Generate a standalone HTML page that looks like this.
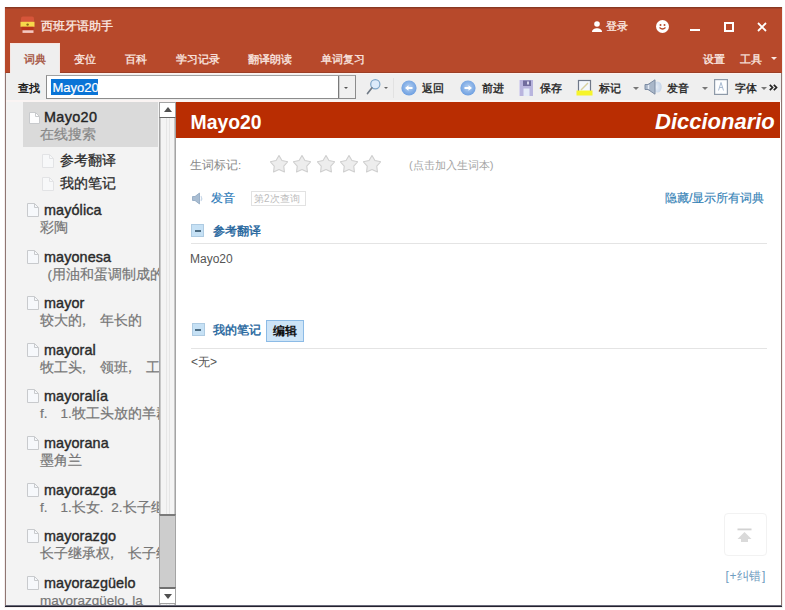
<!DOCTYPE html>
<html><head><meta charset="utf-8">
<style>
*{margin:0;padding:0;box-sizing:border-box}
html,body{width:785px;height:610px;overflow:hidden;background:#fff;font-family:"Liberation Sans",sans-serif}
.a{position:absolute;white-space:nowrap}
svg{display:block}
.tt{color:#fbe9e3;font-size:11.3px;line-height:12px;-webkit-text-stroke:0.3px #fbe9e3}
.tb{font-size:11.3px;line-height:12px;color:#222;-webkit-text-stroke:0.35px #222}
.hw{font-size:14.4px;line-height:15px;color:#2a2a2a;-webkit-text-stroke:0.4px #2a2a2a;letter-spacing:0.1px}
.tr{font-size:13.5px;line-height:15px;color:#767676;-webkit-text-stroke:0.2px #767676}
.doc{position:absolute;width:11px;height:12px;border:1px solid #c9ced6;background:#f8f9fb}
.sdoc{position:absolute;width:11px;height:11px;border:1px solid #dde0e4;background:#f6f7f8}
.tri{position:absolute;width:0;height:0;border-left:3px solid transparent;border-right:3px solid transparent;border-top:3px solid #777}
</style></head><body>
<!-- window frame -->
<div class="a" style="left:4px;top:7px;width:779px;height:601px;background:#f4eeee"></div>
<div class="a" style="left:5px;top:7px;width:777px;height:600px;background:#8f7672"></div>
<div class="a" style="left:5px;top:605px;width:777px;height:1px;background:#6a6a7a"></div>
<div class="a" style="left:5px;top:606px;width:777px;height:1px;background:#22222e"></div>
<div class="a" style="left:5px;top:7px;width:777px;height:66px;background:#b7492b"></div>
<div class="a" style="left:5px;top:7px;width:777px;height:1px;background:#8a3822"></div>
<div class="a" style="left:5px;top:8px;width:777px;height:1px;background:#a2412a"></div>

<!-- title bar -->
<svg class="a" style="left:19px;top:15px" width="17" height="20" viewBox="0 0 17 20">
  <rect x="2" y="1.5" width="13" height="6" rx="2" fill="#d6553a"/>
  <rect x="1.5" y="6.8" width="14" height="5" fill="#f7d84a"/>
  <circle cx="8.6" cy="9.6" r="1.2" fill="#8a6a1a"/>
  <rect x="2.5" y="11.8" width="12" height="3.2" fill="#b8331c"/>
  <rect x="3.5" y="15.3" width="11" height="2.6" fill="#f4c8c0"/>
</svg>
<div class="a tt" style="left:41px;top:20px;font-size:11.6px">西班牙语助手</div>

<div class="a" style="left:592px;top:21px;width:10px;height:11px">
  <svg width="10" height="11" viewBox="0 0 10 11"><circle cx="5" cy="3" r="2.8" fill="#fff"/><path d="M0 11 C0 6 10 6 10 11Z" fill="#fff"/></svg>
</div>
<div class="a tt" style="left:605.5px;top:20px">登录</div>
<div class="a" style="left:656px;top:20px;width:13px;height:13px">
  <svg width="13" height="13" viewBox="0 0 13 13"><circle cx="6.5" cy="6.5" r="6.5" fill="#fff"/><circle cx="4.5" cy="5" r="1" fill="#b7492b"/><circle cx="8.5" cy="5" r="1" fill="#b7492b"/><path d="M3.5 7.5 Q6.5 10.5 9.5 7.5" stroke="#b7492b" stroke-width="1.2" fill="none"/></svg>
</div>
<div class="a" style="left:690px;top:29px;width:10px;height:2px;background:#fff"></div>
<div class="a" style="left:724px;top:22px;width:10px;height:10px;border:2px solid #fff"></div>
<div class="a" style="left:757px;top:22px;width:10px;height:10px">
  <svg width="10" height="10" viewBox="0 0 10 10"><path d="M1 1L9 9M9 1L1 9" stroke="#fff" stroke-width="1.8"/></svg>
</div>

<!-- tabs -->
<div class="a" style="left:10px;top:43px;width:50px;height:31px;background:#efefef;border:1px solid #f6e6e2;border-bottom:none"></div>
<div class="a tt" style="left:24px;top:53px;color:#a4503b;-webkit-text-stroke:0.35px #a4503b">词典</div>
<div class="a tt" style="left:74px;top:53px">变位</div>
<div class="a tt" style="left:125px;top:53px">百科</div>
<div class="a tt" style="left:176px;top:53px">学习记录</div>
<div class="a tt" style="left:248px;top:53px">翻译朗读</div>
<div class="a tt" style="left:321px;top:53px">单词复习</div>
<div class="a tt" style="left:703px;top:52.5px">设置</div>
<div class="a tt" style="left:740px;top:52.5px">工具</div>
<div class="tri" style="left:771px;top:57px;border-top-color:#fbe9e3"></div>

<!-- toolbar -->
<div class="a" style="left:6px;top:73px;width:775px;height:29px;background:#efefef"></div>
<div class="a" style="left:6px;top:72px;width:4px;height:1px;background:#9c3f26"></div>
<div class="a" style="left:60px;top:72px;width:721px;height:1px;background:#9c3f26"></div>
<div class="a" style="left:60px;top:73px;width:721px;height:1px;background:#fcf2f0"></div>
<div class="a" style="left:6px;top:100px;width:775px;height:2px;background:#faf4f3"></div>
<div class="a tb" style="left:17.5px;top:81.5px;font-weight:bold;-webkit-text-stroke:0">查找</div>
<div class="a" style="left:46px;top:75px;width:310px;height:24px;border:1px solid #8c8c8c;border-top-color:#a0a0a0;background:#fff"></div>
<div class="a" style="left:51px;top:79px;height:16px;width:47px;background:#0a74d6"></div>
<div class="a" style="left:52.5px;top:79.5px;font-size:13px;line-height:16px;color:#fff;-webkit-text-stroke:0.2px #fff">Mayo20</div>
<div class="a" style="left:338px;top:76px;width:17px;height:22px;background:#f0f0f0;border-left:1px solid #7a7a7a;box-shadow:inset 1px 0 0 #cfcfcf"></div>
<div class="a" style="left:344px;top:86.5px;border-left:2.5px solid transparent;border-right:2.5px solid transparent;border-top:2.5px solid #555"></div>

<svg class="a" style="left:366px;top:78px" width="15" height="17" viewBox="0 0 15 17">
<circle cx="9.3" cy="6.3" r="4.6" fill="#dcebfa" stroke="#7ea6c8" stroke-width="1.2"/>
<path d="M6 9.8L1.5 15.5" stroke="#707a86" stroke-width="1.7" stroke-linecap="round"/>
</svg>
<div class="a" style="left:384px;top:86.5px;border-left:2.5px solid transparent;border-right:2.5px solid transparent;border-top:2.5px solid #666"></div>
<div class="a" style="left:393px;top:78px;width:1px;height:20px;background:#e2e2e2"></div>

<svg class="a" style="left:401px;top:80px" width="16" height="16" viewBox="0 0 16 16"><defs><radialGradient id="bg1" cx="50%" cy="45%" r="55%"><stop offset="0" stop-color="#b4d0f2"/><stop offset="1" stop-color="#6c9ee0"/></radialGradient></defs><circle cx="8" cy="8" r="7.6" fill="url(#bg1)"/><path d="M4 8L7.5 5.2V6.9H11.5V9.1H7.5V10.8Z" fill="#fff"/></svg>
<div class="a tb" style="left:422px;top:81.5px">返回</div>
<svg class="a" style="left:460px;top:80px" width="16" height="16" viewBox="0 0 16 16"><circle cx="8" cy="8" r="7.6" fill="url(#bg1)"/><path d="M12 8L8.5 5.2V6.9H4.5V9.1H8.5V10.8Z" fill="#fff"/></svg>
<div class="a tb" style="left:481.5px;top:81.5px">前进</div>

<svg class="a" style="left:519px;top:80px" width="15" height="16" viewBox="0 0 15 16">
<rect x="0" y="0" width="14" height="16" fill="#b9b5de"/>
<rect x="4" y="0.5" width="8" height="5.5" fill="#716d9e"/>
<rect x="8" y="1.5" width="2" height="3" fill="#d8d6ee"/>
<rect x="4.5" y="8.5" width="6" height="7.5" fill="#e4ebf8"/>
<rect x="0" y="0" width="1" height="16" fill="#d9d6ee"/>
</svg>
<div class="a tb" style="left:540px;top:81.5px">保存</div>

<svg class="a" style="left:576px;top:79px" width="17" height="17" viewBox="0 0 17 17">
<rect x="2.5" y="1.5" width="12" height="12" fill="#f4f8fd" stroke="#6f7888" stroke-width="1.2"/>
<path d="M5 11L12 4" stroke="#d8d0a0" stroke-width="1.5"/>
<rect x="0.5" y="11.5" width="16" height="5" fill="#f6f42a"/>
</svg>
<div class="a tb" style="left:599px;top:81.5px">标记</div>
<div class="tri" style="left:633px;top:87px"></div>

<svg class="a" style="left:644px;top:79px" width="20" height="16" viewBox="0 0 20 16">
<defs><radialGradient id="wv" cx="30%" cy="50%" r="70%"><stop offset="0" stop-color="#e8f0fa"/><stop offset="1" stop-color="#b9cde6"/></radialGradient></defs>
<ellipse cx="13.5" cy="8" rx="4.2" ry="5.5" fill="url(#wv)" opacity="0.8"/>
<path d="M1 5.5H4L11 0.8V15.2L4 10.5H1Z" fill="#a9b7c9" stroke="#7d8ca3" stroke-width="1"/>
<path d="M4.5 6V10" stroke="#e4ebf4" stroke-width="1.5"/>
</svg>
<div class="a tb" style="left:667px;top:81.5px">发音</div>
<div class="tri" style="left:702px;top:87px"></div>

<svg class="a" style="left:714px;top:79px" width="14" height="16" viewBox="0 0 14 16">
<rect x="0.6" y="0.6" width="12.8" height="14.8" fill="#fdfeff" stroke="#8e9aa8" stroke-width="1.2"/>
<path d="M4.5 11.5L7 3.5L9.5 11.5M5.5 8.5H8.5" stroke="#9fb3cc" stroke-width="0.9" fill="none"/>
</svg>
<div class="a tb" style="left:735px;top:81.5px">字体</div>
<div class="tri" style="left:761px;top:87px"></div>
<svg class="a" style="left:769px;top:84px" width="9" height="7" viewBox="0 0 9 7"><path d="M0.8 0.8L3.5 3.5L0.8 6.2M4.8 0.8L7.5 3.5L4.8 6.2" stroke="#222" stroke-width="1.7" fill="none"/></svg>

<!-- main area -->
<div class="a" style="left:6px;top:102px;width:775px;height:503px;background:#fff"></div>

<!-- sidebar -->
<div class="a" style="left:6px;top:102px;width:153px;height:503px;background:#f3f3f3;overflow:hidden">
  <div class="a" style="left:17px;top:0px;width:135px;height:45px;background:#dadada"></div>
  <svg class="a" style="left:23px;top:10px" width="11" height="12" viewBox="0 0 11 12"><path d="M0.5 0.5H6.5L10.5 4.5V11.5H0.5Z" fill="#fdfdfe" stroke="#c8cacd"/><path d="M6.5 0.5V4.5H10.5" fill="none" stroke="#c8cacd"/></svg>
  <div class="a hw" style="left:38px;top:7.5px;color:#222;letter-spacing:0.35px">Mayo20</div>
  <div class="a tr" style="left:34px;top:25px;color:#888;-webkit-text-stroke-color:#888">在线搜索</div>
  <svg class="a" style="left:36px;top:52px" width="12" height="14" viewBox="0 0 12 14"><path d="M0.5 0.5H7.5L11.5 4.5V13.5H0.5Z" fill="#f7f8f9" stroke="#e2e3e5"/><path d="M7.5 0.5V4.5H11.5" fill="none" stroke="#e2e3e5"/></svg>
  <div class="a hw" style="left:54px;top:51px;font-size:13.5px;-webkit-text-stroke:0.25px #2a2a2a">参考翻译</div>
  <svg class="a" style="left:36px;top:75px" width="12" height="14" viewBox="0 0 12 14"><path d="M0.5 0.5H7.5L11.5 4.5V13.5H0.5Z" fill="#f7f8f9" stroke="#e2e3e5"/><path d="M7.5 0.5V4.5H11.5" fill="none" stroke="#e2e3e5"/></svg>
  <div class="a hw" style="left:54px;top:74px;font-size:13.5px;-webkit-text-stroke:0.25px #2a2a2a">我的笔记</div>
<svg class="a" style="left:21px;top:100.9px" width="12" height="14" viewBox="0 0 12 14"><path d="M0.5 0.5H7.5L11.5 4.5V13.5H0.5Z" fill="#f6f8fb" stroke="#c8cacd"/><path d="M7.5 0.5V4.5H11.5" fill="none" stroke="#c8cacd"/></svg>
<div class="a hw" style="left:38px;top:100.9px">mayólica</div>
<div class="a tr" style="left:34px;top:117.9px">彩陶</div>
<svg class="a" style="left:21px;top:147.5px" width="12" height="14" viewBox="0 0 12 14"><path d="M0.5 0.5H7.5L11.5 4.5V13.5H0.5Z" fill="#f6f8fb" stroke="#c8cacd"/><path d="M7.5 0.5V4.5H11.5" fill="none" stroke="#c8cacd"/></svg>
<div class="a hw" style="left:38px;top:147.5px">mayonesa</div>
<div class="a tr" style="left:41.5px;top:164.5px">(用油和蛋调制成的</div>
<svg class="a" style="left:21px;top:194.1px" width="12" height="14" viewBox="0 0 12 14"><path d="M0.5 0.5H7.5L11.5 4.5V13.5H0.5Z" fill="#f6f8fb" stroke="#c8cacd"/><path d="M7.5 0.5V4.5H11.5" fill="none" stroke="#c8cacd"/></svg>
<div class="a hw" style="left:38px;top:194.1px">mayor</div>
<div class="a tr" style="left:34px;top:211.1px">较大的<span style="margin-left:-5px;margin-right:5px">，</span> 年长的</div>
<svg class="a" style="left:21px;top:240.7px" width="12" height="14" viewBox="0 0 12 14"><path d="M0.5 0.5H7.5L11.5 4.5V13.5H0.5Z" fill="#f6f8fb" stroke="#c8cacd"/><path d="M7.5 0.5V4.5H11.5" fill="none" stroke="#c8cacd"/></svg>
<div class="a hw" style="left:38px;top:240.7px">mayoral</div>
<div class="a tr" style="left:34px;top:257.7px">牧工头<span style="margin-left:-5px;margin-right:5px">，</span> 领班<span style="margin-left:-5px;margin-right:5px">，</span> 工头</div>
<svg class="a" style="left:21px;top:287.3px" width="12" height="14" viewBox="0 0 12 14"><path d="M0.5 0.5H7.5L11.5 4.5V13.5H0.5Z" fill="#f6f8fb" stroke="#c8cacd"/><path d="M7.5 0.5V4.5H11.5" fill="none" stroke="#c8cacd"/></svg>
<div class="a hw" style="left:38px;top:287.3px">mayoralía</div>
<div class="a tr" style="left:34px;top:304.3px">f.<span style="margin-left:13px"></span>1.牧工头放的羊群</div>
<svg class="a" style="left:21px;top:333.9px" width="12" height="14" viewBox="0 0 12 14"><path d="M0.5 0.5H7.5L11.5 4.5V13.5H0.5Z" fill="#f6f8fb" stroke="#c8cacd"/><path d="M7.5 0.5V4.5H11.5" fill="none" stroke="#c8cacd"/></svg>
<div class="a hw" style="left:38px;top:333.9px">mayorana</div>
<div class="a tr" style="left:34px;top:350.9px">墨角兰</div>
<svg class="a" style="left:21px;top:380.5px" width="12" height="14" viewBox="0 0 12 14"><path d="M0.5 0.5H7.5L11.5 4.5V13.5H0.5Z" fill="#f6f8fb" stroke="#c8cacd"/><path d="M7.5 0.5V4.5H11.5" fill="none" stroke="#c8cacd"/></svg>
<div class="a hw" style="left:38px;top:380.5px">mayorazga</div>
<div class="a tr" style="left:34px;top:397.5px">f.<span style="margin-left:13px"></span>1.长女.<span style="margin-left:7.8px"></span>2.长子继承</div>
<svg class="a" style="left:21px;top:427.1px" width="12" height="14" viewBox="0 0 12 14"><path d="M0.5 0.5H7.5L11.5 4.5V13.5H0.5Z" fill="#f6f8fb" stroke="#c8cacd"/><path d="M7.5 0.5V4.5H11.5" fill="none" stroke="#c8cacd"/></svg>
<div class="a hw" style="left:38px;top:427.1px">mayorazgo</div>
<div class="a tr" style="left:34px;top:444.1px">长子继承权<span style="margin-left:-5px;margin-right:5px">，</span> 长子继</div>
<svg class="a" style="left:21px;top:473.7px" width="12" height="14" viewBox="0 0 12 14"><path d="M0.5 0.5H7.5L11.5 4.5V13.5H0.5Z" fill="#f6f8fb" stroke="#c8cacd"/><path d="M7.5 0.5V4.5H11.5" fill="none" stroke="#c8cacd"/></svg>
<div class="a hw" style="left:38px;top:473.7px">mayorazgüelo</div>
<div class="a tr" style="left:34px;top:490.7px">mayorazgüelo, la</div>
</div>

<!-- scrollbar -->
<div class="a" style="left:159px;top:102px;width:17px;height:503px;background:#f4f4f4;border-left:1px solid #a4a4a4;border-right:1px solid #a4a4a4;box-shadow:inset 1px 0 0 #c8c8c8,inset -1px 0 0 #c8c8c8"></div>
<div class="a" style="left:166px;top:102px;width:1px;height:503px;background:#e6e6e6"></div><div class="a" style="left:169px;top:102px;width:1px;height:503px;background:#e6e6e6"></div>
<div class="a" style="left:159px;top:102px;width:17px;height:16px;background:#fff;border:1px solid #a4a4a4;border-bottom:1px solid #666"></div>
<div class="a" style="left:163.5px;top:107px;border-left:4px solid transparent;border-right:4px solid transparent;border-bottom:5px solid #505050"></div>
<div class="a" style="left:159px;top:514px;width:17px;height:74px;background:#cdcdcd;border:1px solid #a4a4a4;border-top:2px solid #7a7a7a"></div>
<div class="a" style="left:159px;top:587px;width:17px;height:17px;background:#fff;border:1px solid #a4a4a4;border-top:2px solid #707070"></div>
<div class="a" style="left:163.5px;top:594px;border-left:4px solid transparent;border-right:4px solid transparent;border-top:5px solid #505050"></div>

<!-- content -->
<div class="a" style="left:176px;top:102px;width:604px;height:36px;background:#b92d02"></div>
<div class="a" style="left:190.5px;top:110.5px;font-size:19.4px;line-height:22px;font-weight:bold;color:#fff">Mayo20</div>
<div class="a" style="left:655px;top:110px;font-size:22px;line-height:24px;font-weight:bold;font-style:italic;color:#fff">Diccionario</div>

<div class="a" style="left:190px;top:159px;font-size:11.5px;line-height:12px;color:#888">生词标记:</div>
<svg class="a" style="left:270.0px;top:155px" width="18" height="18" viewBox="0 0 18 18"><path d="M9.00 0.40 L11.94 5.55 L17.75 6.76 L13.76 11.15 L14.41 17.04 L9.00 14.60 L3.59 17.04 L4.24 11.15 L0.25 6.76 L6.06 5.55Z" fill="#ededed" stroke="#cfcfcf" stroke-width="1.1" stroke-linejoin="round"/></svg>
<svg class="a" style="left:293.3px;top:155px" width="18" height="18" viewBox="0 0 18 18"><path d="M9.00 0.40 L11.94 5.55 L17.75 6.76 L13.76 11.15 L14.41 17.04 L9.00 14.60 L3.59 17.04 L4.24 11.15 L0.25 6.76 L6.06 5.55Z" fill="#ededed" stroke="#cfcfcf" stroke-width="1.1" stroke-linejoin="round"/></svg>
<svg class="a" style="left:316.6px;top:155px" width="18" height="18" viewBox="0 0 18 18"><path d="M9.00 0.40 L11.94 5.55 L17.75 6.76 L13.76 11.15 L14.41 17.04 L9.00 14.60 L3.59 17.04 L4.24 11.15 L0.25 6.76 L6.06 5.55Z" fill="#ededed" stroke="#cfcfcf" stroke-width="1.1" stroke-linejoin="round"/></svg>
<svg class="a" style="left:339.9px;top:155px" width="18" height="18" viewBox="0 0 18 18"><path d="M9.00 0.40 L11.94 5.55 L17.75 6.76 L13.76 11.15 L14.41 17.04 L9.00 14.60 L3.59 17.04 L4.24 11.15 L0.25 6.76 L6.06 5.55Z" fill="#ededed" stroke="#cfcfcf" stroke-width="1.1" stroke-linejoin="round"/></svg>
<svg class="a" style="left:363.2px;top:155px" width="18" height="18" viewBox="0 0 18 18"><path d="M9.00 0.40 L11.94 5.55 L17.75 6.76 L13.76 11.15 L14.41 17.04 L9.00 14.60 L3.59 17.04 L4.24 11.15 L0.25 6.76 L6.06 5.55Z" fill="#ededed" stroke="#cfcfcf" stroke-width="1.1" stroke-linejoin="round"/></svg>
<div class="a" style="left:409px;top:159px;font-size:11.3px;line-height:12px;color:#a6a6a6">(点击加入生词本)</div>

<svg class="a" style="left:192px;top:192px" width="12" height="13" viewBox="0 0 12 13">
<path d="M0.5 4.5H3L7.5 1V12L3 8.5H0.5Z" fill="#a9bdd2" stroke="#8da6bf" stroke-width="0.8"/>
<path d="M9 4Q10.5 6.5 9 9" stroke="#c9d8e8" stroke-width="1.2" fill="none"/>
</svg>
<div class="a" style="left:210.5px;top:191.5px;font-size:12.4px;line-height:13px;color:#2f7cba;-webkit-text-stroke:0.2px #2f7cba">发音</div>
<div class="a" style="left:251px;top:191px;width:55px;height:15px;border:1px solid #e2e2e2"></div>
<div class="a" style="left:254px;top:193px;font-size:10px;line-height:11px;color:#bcbcbc">第2次查询</div>
<div class="a" style="left:665px;top:191.5px;font-size:12.45px;line-height:13px;color:#3582b6;-webkit-text-stroke:0.15px #3582b6">隐藏/显示所有词典</div>

<div class="a" style="left:191px;top:224px;width:13px;height:13px;background:#c6e1f5;border:1px solid #aecbe2"></div>
<div class="a" style="left:194.5px;top:230px;width:6px;height:2px;background:#4d6d84"></div>
<div class="a" style="left:213px;top:225px;font-size:12px;line-height:13px;color:#22649c;-webkit-text-stroke:0.4px #22649c">参考翻译</div>
<div class="a" style="left:191px;top:243px;width:576px;height:1px;background:#e4e4e4"></div>
<div class="a" style="left:190px;top:253px;font-size:12px;line-height:13px;color:#555">Mayo20</div>

<div class="a" style="left:191.5px;top:323px;width:13px;height:13px;background:#c6e1f5;border:1px solid #aecbe2"></div>
<div class="a" style="left:195px;top:329px;width:6px;height:2px;background:#4d6d84"></div>
<div class="a" style="left:213px;top:324px;font-size:12px;line-height:13px;color:#22649c;-webkit-text-stroke:0.4px #22649c">我的笔记</div>
<div class="a" style="left:266px;top:320px;width:38px;height:22px;background:#cde4f7;border:1px solid #8cbbe6"></div>
<div class="a" style="left:273px;top:325px;font-size:12px;line-height:13px;font-weight:bold;color:#111">编辑</div>
<div class="a" style="left:191px;top:348px;width:576px;height:1px;background:#e4e4e4"></div>
<div class="a" style="left:191px;top:356px;font-size:12px;line-height:13px;color:#555">&lt;无&gt;</div>

<div class="a" style="left:724px;top:513px;width:43px;height:43px;border:1px solid #f2f2f2;border-radius:4px"></div>
<svg class="a" style="left:737px;top:528px" width="15" height="15" viewBox="0 0 15 15">
<rect x="0.5" y="0.5" width="14" height="1.8" fill="#d2d2d2"/>
<path d="M7.5 4L14.5 11H11V14H4V11H0.5Z" fill="#dadada"/>
</svg>
<div class="a" style="left:725.5px;top:569.5px;font-size:12px;line-height:12px;color:#6f9cc0;letter-spacing:0.55px">[+纠错]</div>
</body></html>
